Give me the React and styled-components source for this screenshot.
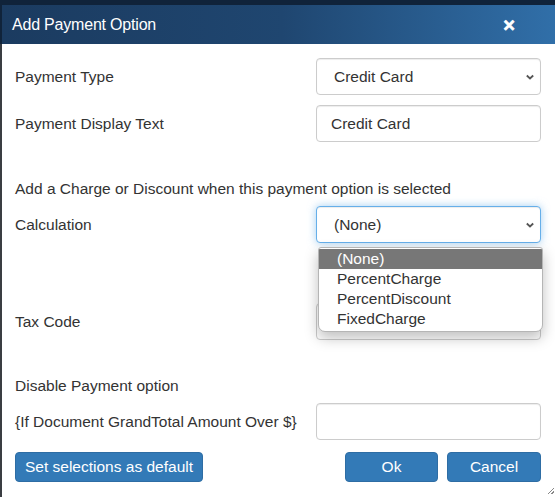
import React from 'react';
import styled, { createGlobalStyle } from 'styled-components';

const GlobalStyle = createGlobalStyle`
  html, body {
    margin: 0;
    padding: 0;
    background: #3a3d42;
  }
  body {
    font-family: "Liberation Sans", Arial, sans-serif;
    overflow: hidden;
  }
`;

const Backdrop = styled.div`
  width: 555px;
  height: 497px;
  box-sizing: border-box;
  padding: 5px 0 0 2px;
  background: linear-gradient(to bottom, #10233a 0px, #10233a 44px, #3a3d42 44px);
`;

const Dialog = styled.div`
  width: 560px;
  height: 492px;
  background: #fff;
  display: flex;
  flex-direction: column;
  position: relative;
`;

const Header = styled.div`
  height: 39px;
  display: flex;
  align-items: center;
  justify-content: space-between;
  padding: 0 47px 0 10px;
  background: linear-gradient(to right, #1b3b60 0%, #1f4670 50%, #3170aa 100%);
  color: #fff;
`;

const Title = styled.span`
  font-size: 16px;
  letter-spacing: -0.2px;
`;

const Close = styled.span`
  font-size: 20px;
  font-weight: bold;
  line-height: 1;
  -webkit-text-stroke: 0.6px #fff;
`;

const Body = styled.div`
  padding: 14px 0 0 13px;
  width: 526px;
  display: flex;
  flex-direction: column;
`;

const Row = styled.div`
  display: flex;
  align-items: center;
  justify-content: space-between;
  margin-top: ${p => p.top || 0}px;
  position: relative;
`;

const Label = styled.span`
  font-size: 15.5px;
  color: #333;
`;

const Note = styled.div`
  font-size: 15.5px;
  color: #333;
  margin-top: ${p => p.top || 0}px;
  line-height: 18px;
`;

const Field = styled.div`
  width: 225px;
  height: 37px;
  box-sizing: border-box;
  border: 1px solid ${p => (p.focus ? '#66afe9' : '#ccc')};
  border-radius: 4px;
  background: #fff;
  box-shadow: ${p =>
    p.focus
      ? 'inset 0 1px 1px rgba(0,0,0,.075), 0 0 8px rgba(102,175,233,.6)'
      : 'inset 0 1px 1px rgba(0,0,0,.075)'};
  display: flex;
  align-items: center;
  justify-content: space-between;
  padding: 0 4px 0 ${p => (p.select ? 17 : 14)}px;
  font-size: 15.5px;
  color: #333;
`;

const Chevron = () => (
  <svg width="12" height="12" viewBox="0 0 12 12">
    <path d="M2.8 4.5 L6 7.5 L9.2 4.5" fill="none" stroke="#555" strokeWidth="1.8" />
  </svg>
);

const Dropdown = styled.ul`
  position: absolute;
  left: 303px;
  top: 41px;
  width: 223px;
  margin: 0;
  padding: 1px 0 2px;
  list-style: none;
  background: #fff;
  border: 1px solid #b5b5b5;
  border-radius: 3px 3px 7px 7px;
  overflow: hidden;
  box-shadow: 0 6px 14px rgba(0,0,0,.25);
  z-index: 2;
`;

const Option = styled.li`
  height: 20px;
  line-height: 20px;
  padding-left: 18px;
  font-size: 15.5px;
  color: ${p => (p.active ? '#fff' : '#333')};
  background: ${p => (p.active ? '#777' : 'transparent')};
`;

const Footer = styled.div`
  display: flex;
  justify-content: space-between;
  margin-top: 12px;
`;

const Group = styled.div`
  display: flex;
  gap: 9px;
`;

const Button = styled.button`
  height: 30px;
  width: ${p => p.w}px;
  padding: 0;
  border: 1px solid #2e6da4;
  border-radius: 4px;
  background: #337ab7;
  color: #fff;
  font-family: "Liberation Sans", Arial, sans-serif;
  font-size: 15.5px;
`;

const Grip = styled.div`
  position: absolute;
  right: 8px;
  bottom: 3px;
  width: 6px;
  height: 6px;
  background: linear-gradient(135deg, transparent 45%, #888 45%, #888 55%, transparent 55%, transparent 75%, #888 75%, #888 85%, transparent 85%);
`;

export default function App() {
  return (
    <>
      <GlobalStyle />
      <Backdrop>
        <Dialog>
          <Header>
            <Title>Add Payment Option</Title>
            <Close>×</Close>
          </Header>
          <Body>
            <Row>
              <Label>Payment Type</Label>
              <Field select>
                Credit Card
                <Chevron />
              </Field>
            </Row>
            <Row top={10}>
              <Label>Payment Display Text</Label>
              <Field>Credit Card</Field>
            </Row>
            <Note top={38}>Add a Charge or Discount when this payment option is selected</Note>
            <Row top={8}>
              <Label>Calculation</Label>
              <Field select focus>
                (None)
                <Chevron />
              </Field>
              <Dropdown>
                <Option active>(None)</Option>
                <Option>PercentCharge</Option>
                <Option>PercentDiscount</Option>
                <Option>FixedCharge</Option>
              </Dropdown>
            </Row>
            <Row top={60}>
              <Label>Tax Code</Label>
              <Field select>
                <span />
                <Chevron />
              </Field>
            </Row>
            <Note top={37}>Disable Payment option</Note>
            <Row top={8}>
              <Label>{'{If Document GrandTotal Amount Over $}'}</Label>
              <Field />
            </Row>
            <Footer>
              <Button w={188}>Set selections as default</Button>
              <Group>
                <Button w={93}>Ok</Button>
                <Button w={94}>Cancel</Button>
              </Group>
            </Footer>
          </Body>
          <Grip />
        </Dialog>
      </Backdrop>
    </>
  );
}
